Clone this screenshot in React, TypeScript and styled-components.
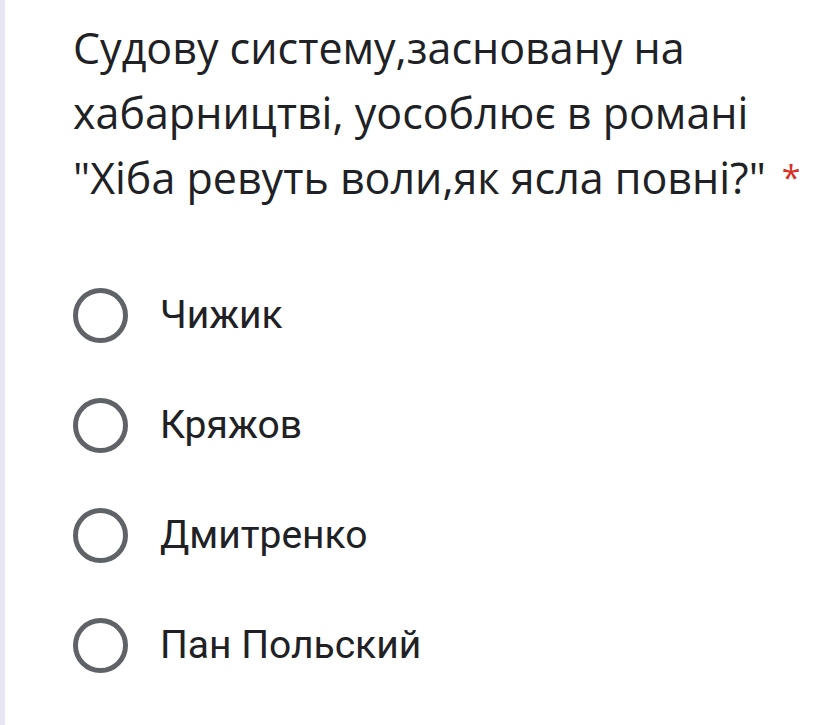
import styled, { createGlobalStyle } from "styled-components";

const GlobalStyle = createGlobalStyle`
  html, body {
    margin: 0;
    padding: 0;
    background: #ffffff;
  }
`;

const options = ["Чижик", "Кряжов", "Дмитренко", "Пан Польский"];

const App = () => {
  return (
    <>
      <GlobalStyle />
      <Card>
        <Title>
          Судову систему,засновану на
          <br />
          хабарництві, уособлює в романі
          <br />
          "Хіба ревуть воли,як ясла повні?"<Required>*</Required>
        </Title>
        <OptionList>
          {options.map((label) => (
            <Option key={label}>
              <Radio />
              <OptionLabel>{label}</OptionLabel>
            </Option>
          ))}
        </OptionList>
      </Card>
    </>
  );
};

export default App;

const Card = styled.div`
  box-sizing: border-box;
  width: 814px;
  height: 725px;
  border-left: 5px solid #e7e5f3;
  padding: 15px 20px 0 68px;
  background: #fff;
  overflow: hidden;
`;

const Title = styled.div`
  font-family: "Open Sans", "Liberation Sans", sans-serif;
  font-size: 43px;
  line-height: 65px;
  color: #202124;
  white-space: nowrap;
`;

const Required = styled.span`
  color: #d93025;
  margin-left: 16px;
  font-size: 34px;
  vertical-align: 4px;
`;

const OptionList = styled.div`
  display: flex;
  flex-direction: column;
  margin-top: 50px;
`;

const Option = styled.div`
  display: flex;
  align-items: center;
  height: 110px;
`;

const Radio = styled.span`
  box-sizing: border-box;
  width: 55px;
  height: 55px;
  border: 5px solid #5f6368;
  border-radius: 50%;
  flex-shrink: 0;
`;

const OptionLabel = styled.span`
  font-family: Roboto, "Liberation Sans", sans-serif;
  font-size: 39px;
  color: #202124;
  margin-left: 32px;
`;
